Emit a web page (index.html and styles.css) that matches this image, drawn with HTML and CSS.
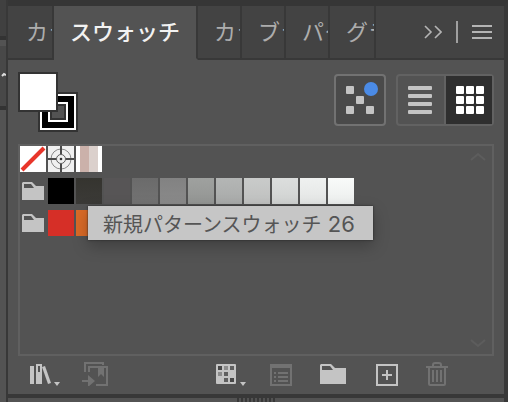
FILE: index.html
```html
<!DOCTYPE html>
<html lang="ja">
<head>
    <meta charset="UTF-8">
    <meta name="viewport" content="width=device-width, initial-scale=1.0">
    <title>スウォッチ</title>
    <link rel="stylesheet" href="styles.css">
</head>
<body>
    <div class="dock">
        <div class="dock-head"></div>
        <div class="dock-field">
            <svg width="6" height="50" viewBox="0 0 6 50"><path d="M2 26l2-2 2 1" stroke="#ddd" stroke-width="2" fill="none"/></svg>
        </div>
        <div class="dock-body"></div>
    </div>
    <main class="panel">
        <header class="tabs">
            <button type="button" class="tab first">カラ</button>
            <button type="button" class="tab active">スウォッチ</button>
            <button type="button" class="tab">カラ</button>
            <button type="button" class="tab">ブラ</button>
            <button type="button" class="tab">パタ</button>
            <button type="button" class="tab last">グラ</button>
            <div class="tab-tools">
                <button type="button" aria-label="折りたたむ">
                    <svg width="18" height="14" viewBox="0 0 18 14"><path d="M1 1l6 6-6 6M11 1l6 6-6 6" fill="none" stroke="#b4b4b4" stroke-width="1.6"/></svg>
                </button>
                <span class="bar"></span>
                <button type="button" aria-label="メニュー">
                    <svg width="20" height="14" viewBox="0 0 20 14"><path d="M0 1h20M0 7h20M0 13h20" stroke="#b4b4b4" stroke-width="2"/></svg>
                </button>
            </div>
        </header>

        <section class="controls">
            <svg class="fill-stroke" width="60" height="60" viewBox="0 0 60 60">
                <path fill="#333" d="M20 20h40v40H20z"/>
                <path fill="#fff" d="M22 22h36v36H22z"/>
                <path fill="#000" d="M24 24h32v32H24z"/>
                <path fill="#fff" d="M30 30h20v20H30z"/>
                <path fill="#333" d="M32 32h16v16H32z"/>
                <path fill="#535353" d="M34 34h12v12H34z"/>
                <path fill="#333" d="M0 0h40v40H0z"/>
                <path fill="#fff" d="M2 2h36v36H2z"/>
            </svg>
            <button type="button" class="library" aria-label="グループ">
                <svg width="48" height="48" viewBox="0 0 48 48">
                    <g fill="#c4c4c4">
                        <rect x="10" y="10" width="8" height="8" rx="1"/>
                        <rect x="20" y="20" width="8" height="8" rx="1"/>
                        <rect x="10" y="30" width="8" height="8" rx="1"/>
                        <rect x="30" y="30" width="8" height="8" rx="1"/>
                    </g>
                    <circle cx="35" cy="13" r="7" fill="#4b8be6"/>
                </svg>
            </button>
            <div class="views">
                <button type="button" class="off" aria-label="リスト表示">
                    <svg width="24" height="28" viewBox="0 0 24 28" fill="#c4c4c4">
                        <rect width="24" height="4" rx="1"/>
                        <rect y="8" width="24" height="4" rx="1"/>
                        <rect y="16" width="24" height="4" rx="1"/>
                        <rect y="24" width="24" height="4" rx="1"/>
                    </svg>
                </button>
                <button type="button" class="on" aria-label="サムネール表示">
                    <svg width="28" height="28" viewBox="0 0 28 28" fill="#fff">
                        <rect width="8" height="8" rx="1"/><rect x="10" width="8" height="8" rx="1"/><rect x="20" width="8" height="8" rx="1"/>
                        <rect y="10" width="8" height="8" rx="1"/><rect x="10" y="10" width="8" height="8" rx="1"/><rect x="20" y="10" width="8" height="8" rx="1"/>
                        <rect y="20" width="8" height="8" rx="1"/><rect x="10" y="20" width="8" height="8" rx="1"/><rect x="20" y="20" width="8" height="8" rx="1"/>
                    </svg>
                </button>
            </div>
        </section>

        <section class="list">
            <div class="rows">
                <div class="row">
                    <svg width="26" height="26" viewBox="0 0 26 26"><path fill="#fff" d="M0 0h26v26H0z"/><path d="M2 24L24 2" stroke="#e8352a" stroke-width="4"/></svg>
                    <svg width="26" height="26" viewBox="0 0 26 26">
                        <path fill="#f0f0f0" d="M0 0h26v26H0z"/>
                        <g fill="none" stroke="#8a8a8a" stroke-width="1"><circle cx="13" cy="13" r="10"/></g>
                        <path d="M13 0v8M13 18v8M0 13h8M18 13h8" stroke="#4b4b4b" stroke-width="2"/>
                        <circle cx="13" cy="13" r="4.5" fill="#f0f0f0" stroke="#5c5c5c"/>
                        <circle cx="13" cy="13" r="1.3" fill="#333"/>
                    </svg>
                    <svg width="26" height="26" viewBox="0 0 26 26"><path fill="#fff" d="M0 0h26v26H0z"/><path fill="#cbb1aa" d="M4 0h9v26H4z"/><path fill="#dbd0cc" d="M13 0h9v26h-9z"/></svg>
                </div>
                <div class="row">
                    <svg class="folder" width="26" height="26" viewBox="0 0 26 26"><path fill="#c4c4c4" fill-rule="evenodd" d="M3 4h9l4 4h8v14H2V5zM4 6v4h10l-3-4z"/></svg>
                    <span class="swatch black"></span>
                    <span class="swatch k90"></span>
                    <span class="swatch k80"></span>
                    <span class="swatch k70"></span>
                    <span class="swatch k60"></span>
                    <span class="swatch k50"></span>
                    <span class="swatch k40"></span>
                    <span class="swatch k30"></span>
                    <span class="swatch k20"></span>
                    <span class="swatch k10"></span>
                    <span class="swatch k5"></span>
                </div>
                <div class="row">
                    <svg class="folder" width="26" height="26" viewBox="0 0 26 26"><path fill="#c4c4c4" fill-rule="evenodd" d="M3 4h9l4 4h8v14H2V5zM4 6v4h10l-3-4z"/></svg>
                    <span class="swatch red"></span>
                    <span class="swatch orange"></span>
                </div>
            </div>
            <div class="scroll">
                <svg width="16" height="10" viewBox="0 0 16 10"><path d="M1 8l7-6 7 6" fill="none" stroke="#5d5d5d" stroke-width="2"/></svg>
                <svg width="16" height="10" viewBox="0 0 16 10"><path d="M1 2l7 6 7-6" fill="none" stroke="#5d5d5d" stroke-width="2"/></svg>
            </div>
            <div class="tooltip" role="tooltip">新規パターンスウォッチ<span class="num"> 26</span></div>
        </section>

        <footer class="toolbar">
            <button type="button" aria-label="ライブラリ">
                <svg width="30" height="24" viewBox="0 0 30 24" fill="#c4c4c4">
                    <path d="M0 4h4v18H0z"/>
                    <path fill-rule="evenodd" d="M6 2h6v20H6zM8 4v6h2V4z"/>
                    <path d="M12 5l3-1 6 17-3 1z"/>
                    <path d="M24 20h6l-3 4z"/>
                </svg>
            </button>
            <button type="button" aria-label="CC ライブラリに追加">
                <svg width="30" height="24" viewBox="0 0 30 24">
                    <g fill="none" stroke="#727272" stroke-width="2"><path d="M3 10V1h18v2M7 10V5h18v18H14"/><path d="M0 19h8"/></g>
                    <path fill="#727272" d="M6 13l7 6-7 6zM16 4h6v11l-3-3-3 3z"/>
                </svg>
            </button>
            <button type="button" class="push" aria-label="スウォッチの種類">
                <svg width="30" height="24" viewBox="0 0 30 24">
                    <rect y="2" width="20" height="20" rx="1" fill="#c4c4c4"/>
                    <path fill="#474747" d="M2 4h4v4H2zM14 16h4v4h-4z"/>
                    <path fill="#606060" d="M14 4h4v4h-4zM8 10h4v4H8zM8 16h4v4H8z"/>
                    <path fill="#8b8b8b" d="M8 4h4v4H8zM2 10h4v4H2z"/>
                    <path fill="#c4c4c4" d="M24 20h6l-3 4z"/>
                </svg>
            </button>
            <button type="button" aria-label="オプション">
                <svg width="30" height="24" viewBox="0 0 30 24">
                    <path fill="#727272" fill-rule="evenodd" d="M2 2h22v22H2zM4 6v16h18V6z"/>
                    <path d="M6 11h2M10 11h10M6 15h2M10 15h10M6 19h2M10 19h10" stroke="#727272" stroke-width="2"/>
                </svg>
            </button>
            <button type="button" aria-label="新規カラーグループ">
                <svg width="30" height="24" viewBox="0 0 30 24"><path fill="#c4c4c4" fill-rule="evenodd" d="M1 2h10l4 4h11v16H0V3zM2 4v4h11l-3-4z"/></svg>
            </button>
            <button type="button" aria-label="新規スウォッチ">
                <svg width="30" height="24" viewBox="0 0 30 24"><path d="M5 3h20v20H5zM10 13h10M15 8v10" fill="none" stroke="#c4c4c4" stroke-width="2"/></svg>
            </button>
            <button type="button" aria-label="削除">
                <svg width="30" height="24" viewBox="0 0 30 24"><path d="M2 5h22M9 5V3q0-2 2-2h4q2 0 2 2v2M5 5v17q0 1 1 1h14q1 0 1-1V5M9 8v12M13 8v12M17 8v12" fill="none" stroke="#727272" stroke-width="2"/></svg>
            </button>
        </footer>
        <div class="grip"><span></span></div>
    </main>
</body>
</html>
```

FILE: styles.css
```css
* {
    box-sizing: border-box;
}

body {
    margin: 0;
    min-height: 100vh;
    display: flex;
    background: #383838;
    font-family: "Noto Sans CJK JP", sans-serif;
}

svg {
    display: block;
}

button {
    padding: 0;
    border: none;
    background: none;
    font: inherit;
    cursor: pointer;
}

/* strip of the neighbouring window */
.dock {
    width: 8px;
    border-right: 2px solid #383838;
    display: flex;
    flex-direction: column;
    background: #535353;
}

.dock-head {
    height: 40px;
    background: #404040;
    border-bottom: 4px solid #333;
}

.dock-field {
    height: 70px;
    padding-top: 4px;
    background: #484848;
    border-top: 6px solid #535353;
    border-bottom: 4px solid #333;
}

.dock-body {
    flex: 1;
}

.panel {
    flex: 1;
    min-width: 0;
    display: flex;
    flex-direction: column;
    background: #535353;
    border-top: 6px solid #363636;
    border-right: 4px solid #383838;
}

.tabs {
    display: flex;
    height: 54px;
    background: #434343;
}

.tab {
    width: 44px;
    padding: 0 0 4px 16px;
    overflow: hidden;
    text-align: left;
    white-space: nowrap;
    font-size: 22px;
    line-height: 48px;
    color: #adadad;
    border-right: 2px solid #383838;
    border-bottom: 2px solid #383838;
}

.tab.first {
    width: 46px;
    padding-left: 18px;
}

.tab.last {
    width: 46px;
}

.tab.active {
    width: 144px;
    font-weight: 500;
    color: #f2f2f2;
    background: #535353;
    border-bottom-color: #535353;
}

.tab-tools {
    flex: 1;
    display: flex;
    align-items: center;
    justify-content: flex-end;
    gap: 14px;
    padding-right: 12px;
    border-bottom: 2px solid #383838;
}

.bar {
    width: 2px;
    height: 22px;
    background: #a0a0a0;
}

.controls {
    display: flex;
    align-items: center;
    gap: 10px;
    padding: 12px 10px;
}

.fill-stroke {
    margin-right: auto;
}

.library {
    margin-top: -4px;
    background: #4a4a4a;
    border: 2px solid #727272;
    border-radius: 4px;
}

.views {
    display: flex;
    height: 52px;
    margin-top: -4px;
    border: 2px solid #626262;
    border-radius: 4px;
}

.views button {
    display: flex;
    align-items: center;
    justify-content: center;
}

.views .off {
    width: 46px;
    padding-right: 2px;
}

.views .on {
    width: 48px;
    padding-left: 2px;
    background: #2f2f2f;
    border-left: 2px solid #626262;
}

.list {
    position: relative;
    flex: 1;
    display: flex;
    justify-content: space-between;
    margin: 0 10px;
    border: 2px solid #606060;
}

.rows {
    display: flex;
    flex-direction: column;
    gap: 6px;
}

.row {
    display: flex;
    gap: 2px;
}

.swatch {
    width: 26px;
    height: 26px;
}

.black { background: #000; }
.k90 { background: linear-gradient(#35342f, #3b3a37); }
.k80 { background: #575556; }
.k70 { background: linear-gradient(#6b6b6b, #737373); }
.k60 { background: linear-gradient(#828282, #8a8a8a); }
.k50 { background: linear-gradient(#9fa19f, #939593); }
.k40 { background: linear-gradient(#b4b6b5, #a8aaa9); }
.k30 { background: linear-gradient(#c9cbca, #bfc0bf); }
.k20 { background: linear-gradient(#dcdedd, #d0d2d1); }
.k10 { background: linear-gradient(#eff1f0, #e3e5e4); }
.k5 { background: linear-gradient(#f9fbfa, #eceeed); }
.red { background: #d62f27; }
.orange { background: #d96a27; }

.scroll {
    display: flex;
    flex-direction: column;
    justify-content: space-between;
    padding: 6px;
}

.tooltip {
    position: absolute;
    top: 60px;
    left: 68px;
    padding: 2px 18px 0 15px;
    font-size: 20px;
    line-height: 32px;
    white-space: nowrap;
    color: #555;
    background: #c6c6c6;
    box-shadow: 0 0 2px #222, 0 6px 16px rgba(0, 0, 0, 0.25);
}

.num {
    font-family: Inter, sans-serif;
    font-size: 22px;
    line-height: 1;
}

.toolbar {
    display: flex;
    gap: 22px;
    padding: 6px 50px 8px 22px;
}

.toolbar .push {
    margin-left: auto;
}

.grip {
    display: flex;
    justify-content: center;
    height: 8px;
    border-top: 4px solid #383838;
}

.grip span {
    width: 38px;
    background: repeating-linear-gradient(90deg, #383838 0 2px, #535353 2px 4px);
}
```
